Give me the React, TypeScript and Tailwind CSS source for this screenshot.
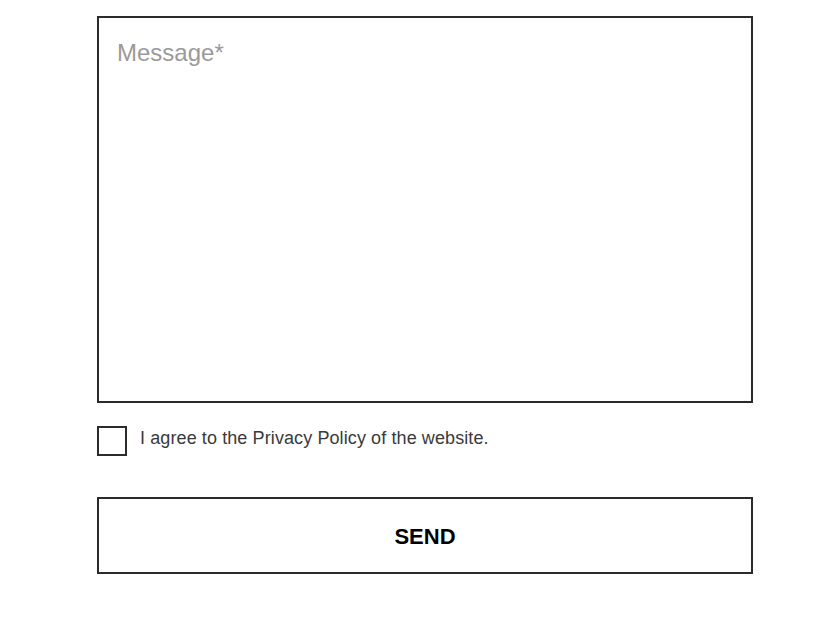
export default function App() {
	return (
		<div className="min-h-screen bg-white pt-4 pl-[97px] font-['Liberation_Sans',Arial,sans-serif]">
			<form className="w-[656px] flex flex-col" onSubmit={(e) => e.preventDefault()}>
				<textarea
					placeholder="Message*"
					className="h-[387px] w-full resize-none border-2 border-[#2b2b2b] px-[18px] pt-[21px] pb-[20px] text-[24px] leading-[28px] text-[#333] placeholder:text-[#9a9a9a] outline-none"
				/>

				<label className="mt-[23px] flex items-start gap-[13px]">
					<input
						type="checkbox"
						className="size-[30px] appearance-none border-2 border-[#2b2b2b] bg-white"
					/>
					<span className="pt-[1px] text-[18px] leading-[22px] tracking-[0.1px] text-[#3a3a3a]">
						I agree to the Privacy Policy of the website.
					</span>
				</label>

				<button
					type="submit"
					className="mt-[41px] h-[77px] w-full border-2 border-[#2b2b2b] bg-white pt-[2px] text-[22px] font-bold text-black"
				>
					SEND
				</button>
			</form>
		</div>
	);
}
